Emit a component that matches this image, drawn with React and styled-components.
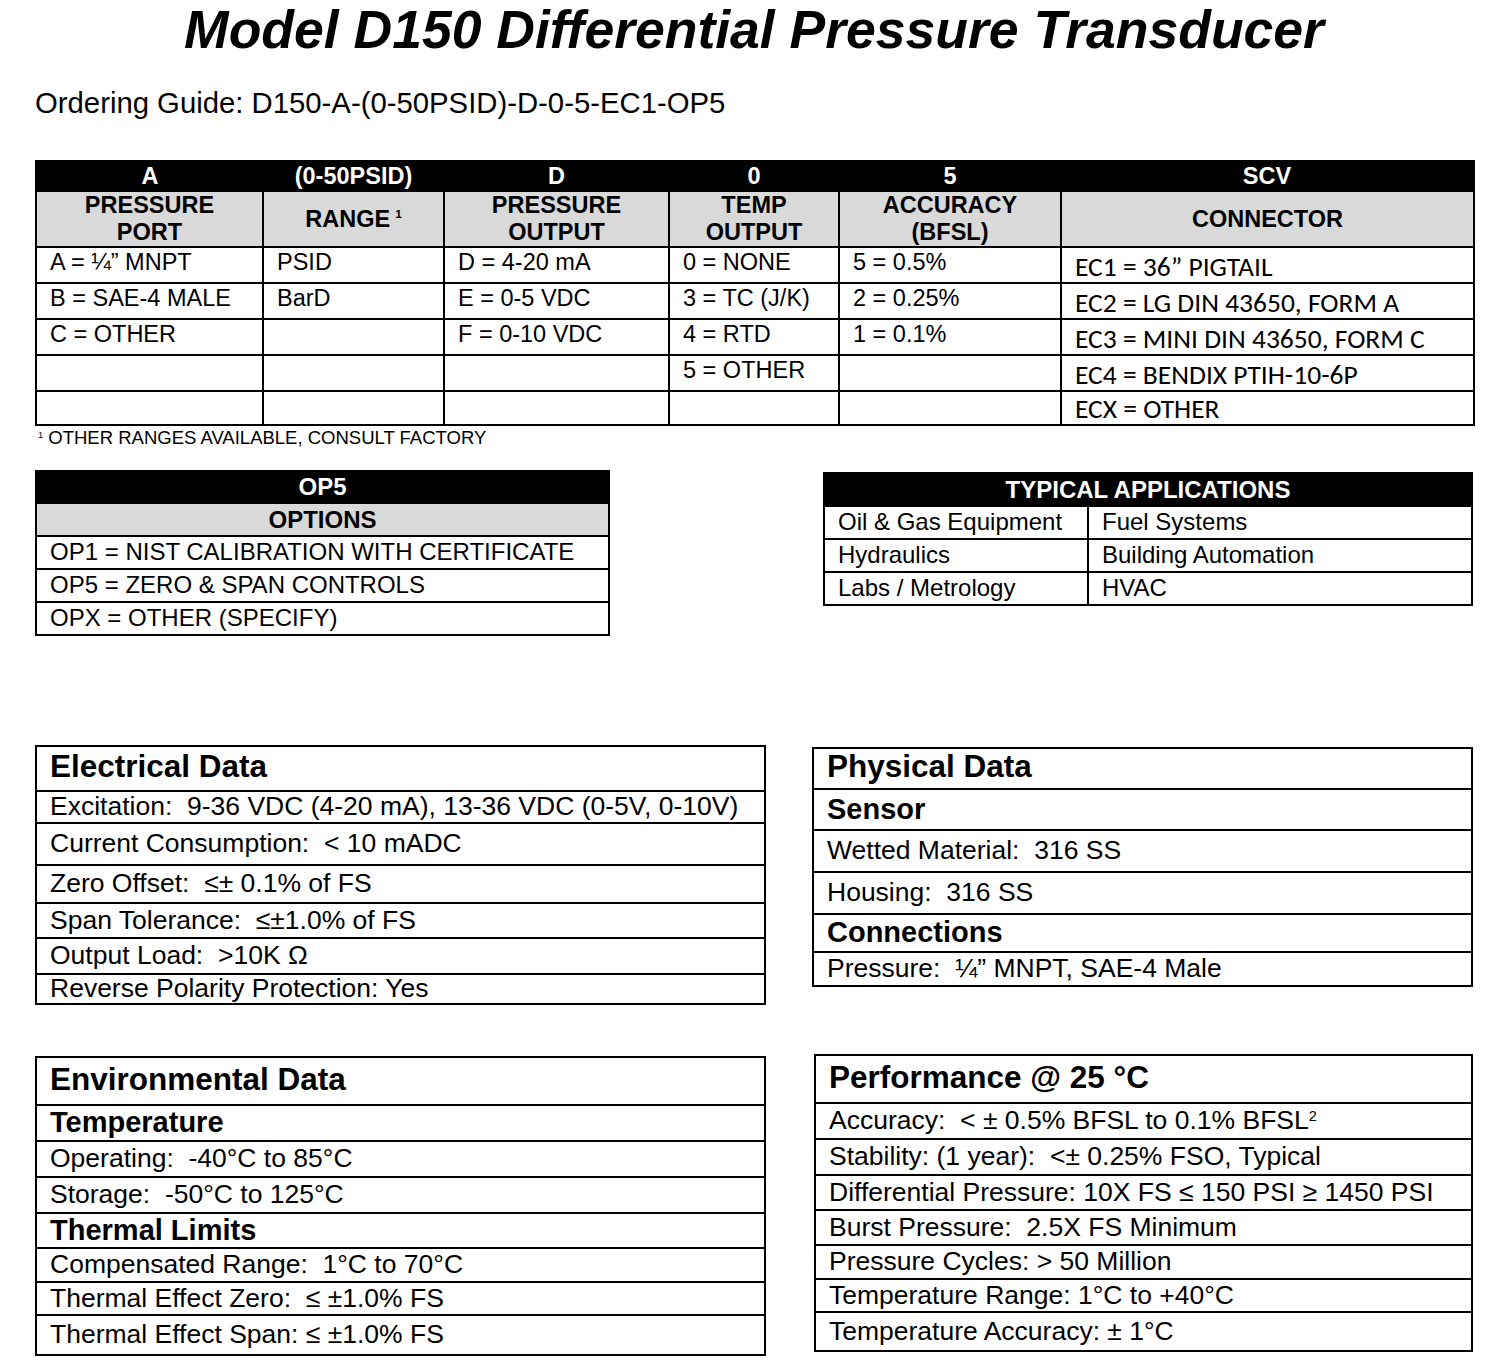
import React from 'react';
import styled, { createGlobalStyle } from 'styled-components';

const GlobalStyle = createGlobalStyle`
	body {
		margin: 0;
		background: #fff;
		color: #000;
		font-family: "Liberation Sans", Arial, sans-serif;
	}
`;

const Page = styled.div`
	width: 1438px;
	padding: 0 27px 14px 35px;
`;

const Title = styled.h1`
	margin: 0;
	font-size: 53.5px;
	line-height: 60px;
	font-weight: bold;
	font-style: italic;
	text-align: center;
`;

const Guide = styled.p`
	margin: 26px 0 0;
	font-size: 29.3px;
	line-height: 34px;
`;

const Table = styled.table`
	width: ${(p) => p.$w}px;
	margin-top: ${(p) => p.$mt || 0}px;
	border-collapse: collapse;
	table-layout: fixed;
	border: 2px solid #000;
`;

const CodeCell = styled.th`
	height: ${(p) => p.$h}px;
	padding: 0;
	background: #000;
	color: #fff;
	font-size: ${(p) => p.$fs}px;
	line-height: ${(p) => p.$h}px;
	font-weight: bold;
	text-align: center;
`;

const HeadCell = styled.th`
	height: ${(p) => p.$h}px;
	padding: 0;
	background: #d9d9d9;
	border: 2px solid #000;
	font-size: ${(p) => p.$fs}px;
	line-height: 27px;
	font-weight: bold;
	text-align: center;
`;

const Cell = styled.td`
	height: ${(p) => p.$h}px;
	padding: 0 0 0 13px;
	border: 2px solid #000;
	font-size: ${(p) => p.$fs}px;
	font-family: ${(p) =>
		p.$alt
			? '"Carlito", "Liberation Sans Narrow", "Liberation Sans", Arial, sans-serif'
			: 'inherit'};
	line-height: ${(p) => (p.$alt ? 30 : 29)}px;
	vertical-align: ${(p) => (p.$alt ? 'bottom' : 'top')};
	white-space: nowrap;
	overflow: hidden;
`;

const Sup = styled.sup`
	font-size: ${(p) => p.$fs || 0.5}em;
	line-height: 0;
	vertical-align: ${(p) => p.$va || 0.7}em;
	margin-left: ${(p) => p.$ml || 0}px;
`;

const Footnote = styled.div`
	margin-top: 1px;
	padding-left: 3px;
	font-size: 18.5px;
	line-height: 22px;
`;

const Pair = styled.div`
	display: flex;
	justify-content: space-between;
	align-items: flex-start;
	margin-top: 21px;
`;

const SpecGrid = styled.div`
	display: grid;
	grid-template-columns: 731px 661px;
	column-gap: 46px;
	row-gap: 49px;
	align-items: start;
	margin-top: 109px;
`;

const SpecBox = styled.div`
	margin-top: ${(p) => p.$mt || 0}px;
	margin-left: ${(p) => p.$ml || 0}px;
	border: 2px solid #000;
`;

const kinds = {
	title: { fs: 31.5, weight: 'bold', pb: 3 },
	sub: { fs: 29, weight: 'bold', pb: 1 },
	data: { fs: 26.5, weight: 'normal', pb: 0 },
};

const SpecRow = styled.div`
	box-sizing: border-box;
	display: flex;
	align-items: center;
	height: ${(p) => p.$h}px;
	padding: 0 0 ${(p) => kinds[p.$kind].pb}px 13px;
	font-size: ${(p) => kinds[p.$kind].fs}px;
	font-weight: ${(p) => kinds[p.$kind].weight};
	line-height: 1.12;
	white-space: pre;
	& + & {
		border-top: 2px solid #000;
	}
`;

const orderCols = [227, 181, 225, 170, 222, 413];

const orderHead = [
	{ code: 'A', label: ['PRESSURE', 'PORT'] },
	{ code: '(0-50PSID)', label: ['RANGE'], sup: true },
	{ code: 'D', label: ['PRESSURE', 'OUTPUT'] },
	{ code: '0', label: ['TEMP', 'OUTPUT'] },
	{ code: '5', label: ['ACCURACY', '(BFSL)'] },
	{ code: 'SCV', label: ['CONNECTOR'] },
];

const orderRows = [
	['A = ¼” MNPT', 'PSID', 'D = 4-20 mA', '0 = NONE', '5 = 0.5%', 'EC1 = 36” PIGTAIL'],
	['B = SAE-4 MALE', 'BarD', 'E = 0-5 VDC', '3 = TC (J/K)', '2 = 0.25%', 'EC2 = LG DIN 43650, FORM A'],
	['C = OTHER', '', 'F = 0-10 VDC', '4 = RTD', '1 = 0.1%', 'EC3 = MINI DIN 43650, FORM C'],
	['', '', '', '5 = OTHER', '', 'EC4 = BENDIX PTIH-10-6P'],
	['', '', '', '', '', 'ECX = OTHER'],
];

const options = [
	'OP1 = NIST CALIBRATION WITH CERTIFICATE',
	'OP5 = ZERO & SPAN CONTROLS',
	'OPX = OTHER (SPECIFY)',
];

const applications = [
	['Oil & Gas Equipment', 'Fuel Systems'],
	['Hydraulics', 'Building Automation'],
	['Labs / Metrology', 'HVAC'],
];

const electrical = [
	['title', 'Electrical Data', 43],
	['data', 'Excitation:  9-36 VDC (4-20 mA), 13-36 VDC (0-5V, 0-10V)', 32],
	['data', 'Current Consumption:  < 10 mADC', 42],
	['data', 'Zero Offset:  ≤± 0.1% of FS', 38],
	['data', 'Span Tolerance:  ≤±1.0% of FS', 35],
	['data', 'Output Load:  >10K Ω', 36],
	['data', 'Reverse Polarity Protection: Yes', 30],
];

const physical = [
	['title', 'Physical Data', 39],
	['sub', 'Sensor', 41],
	['data', 'Wetted Material:  316 SS', 42],
	['data', 'Housing:  316 SS', 42],
	['sub', 'Connections', 38],
	['data', 'Pressure:  ¼” MNPT, SAE-4 Male', 34],
];

const environmental = [
	['title', 'Environmental Data', 46],
	['sub', 'Temperature', 36],
	['data', 'Operating:  -40°C to 85°C', 36],
	['data', 'Storage:  -50°C to 125°C', 36],
	['sub', 'Thermal Limits', 35],
	['data', 'Compensated Range:  1°C to 70°C', 34],
	['data', 'Thermal Effect Zero:  ≤ ±1.0% FS', 33],
	['data', 'Thermal Effect Span: ≤ ±1.0% FS', 40],
];

const performance = [
	['title', 'Performance @ 25 °C', 46],
	['data', 'Accuracy:  < ± 0.5% BFSL to 0.1% BFSL', 36, '2'],
	['data', 'Stability: (1 year):  <± 0.25% FSO, Typical', 36],
	['data', 'Differential Pressure: 10X FS ≤ 150 PSI ≥ 1450 PSI', 35],
	['data', 'Burst Pressure:  2.5X FS Minimum', 35],
	['data', 'Pressure Cycles: > 50 Million', 34],
	['data', 'Temperature Range: 1°C to +40°C', 33],
	['data', 'Temperature Accuracy: ± 1°C', 39],
];

const Spec = ({ rows, mt, ml }) => (
	<SpecBox $mt={mt} $ml={ml}>
		{rows.map(([kind, text, h, sup]) => (
			<SpecRow key={text} $kind={kind} $h={h}>
				<span>
					{text}
					{sup && (
						<Sup $fs={0.55} $va={0.55}>
							{sup}
						</Sup>
					)}
				</span>
			</SpecRow>
		))}
	</SpecBox>
);

const OrderingTable = () => (
	<Table $w={1438} $mt={40}>
		<colgroup>
			{orderCols.map((w, i) => (
				<col key={i} style={{ width: w }} />
			))}
		</colgroup>
		<thead>
			<tr>
				{orderHead.map((h) => (
					<CodeCell key={h.code} $h={28} $fs={23.5}>
						{h.code}
					</CodeCell>
				))}
			</tr>
			<tr>
				{orderHead.map((h) => (
					<HeadCell key={h.code} $h={53} $fs={23.5}>
						{h.label.map((l) => (
							<div key={l}>
								{l}
								{h.sup && <Sup $ml={5}>1</Sup>}
							</div>
						))}
					</HeadCell>
				))}
			</tr>
		</thead>
		<tbody>
			{orderRows.map((row, r) => (
				<tr key={r}>
					{row.map((text, c) => (
						<Cell key={c} $h={r === 4 ? 32 : 34} $fs={c === 5 ? 27.5 : 23.5} $alt={c === 5}>
							{text}
						</Cell>
					))}
				</tr>
			))}
		</tbody>
	</Table>
);

export default function App() {
	return (
		<Page>
			<GlobalStyle />
			<Title>Model D150 Differential Pressure Transducer</Title>
			<Guide>Ordering Guide: D150-A-(0-50PSID)-D-0-5-EC1-OP5</Guide>
			<OrderingTable />
			<Footnote>
				<Sup>1</Sup> OTHER RANGES AVAILABLE, CONSULT FACTORY
			</Footnote>

			<Pair>
				<Table $w={575}>
					<thead>
						<tr>
							<CodeCell $h={30} $fs={24}>OP5</CodeCell>
						</tr>
						<tr>
							<HeadCell $h={31} $fs={24}>OPTIONS</HeadCell>
						</tr>
					</thead>
					<tbody>
						{options.map((o) => (
							<tr key={o}>
								<Cell $h={31} $fs={24}>{o}</Cell>
							</tr>
						))}
					</tbody>
				</Table>

				<Table $w={648} $mt={2}>
					<colgroup>
						<col style={{ width: 264 }} />
						<col style={{ width: 384 }} />
					</colgroup>
					<thead>
						<tr>
							<CodeCell colSpan={2} $h={31} $fs={24}>
								TYPICAL APPLICATIONS
							</CodeCell>
						</tr>
					</thead>
					<tbody>
						{applications.map((row) => (
							<tr key={row[0]}>
								{row.map((a) => (
									<Cell key={a} $h={31} $fs={24}>{a}</Cell>
								))}
							</tr>
						))}
					</tbody>
				</Table>
			</Pair>

			<SpecGrid>
				<Spec rows={electrical} />
				<Spec rows={physical} mt={2} />
				<Spec rows={environmental} mt={2} />
				<Spec rows={performance} ml={2} />
			</SpecGrid>
		</Page>
	);
}
